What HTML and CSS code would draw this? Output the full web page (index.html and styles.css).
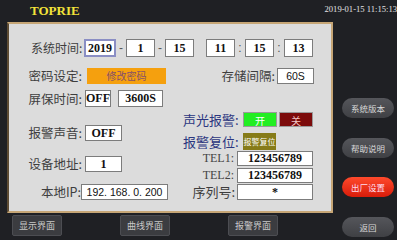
FILE: index.html
```html
<!DOCTYPE html>
<html>
	<head>
		<meta charset="UTF-8">
		<title>TOPRIE</title>
		<link rel="stylesheet" href="styles.css">
	</head>
	<body>
		<div class="top">
			<div class="brand">TOPRIE</div>
			<div class="clock">2019-01-15 11:15:13</div>
		</div>
		<div class="main">
			<div class="left">
				<div class="panel">
					<div class="time">
						<span class="lbl">系统时间:</span>
						<span class="fld on">2019</span>
						<span class="sep">-</span>
						<span class="fld">1</span>
						<span class="sep">-</span>
						<span class="fld">15</span>
						<span class="fld gap">11</span>
						<span class="sep">:</span>
						<span class="fld">15</span>
						<span class="sep">:</span>
						<span class="fld">13</span>
					</div>
					<div class="cols">
						<div class="col-l">
							<div class="item pwd">
								<span class="lbl">密码设定:</span>
								<span class="btn-pwd">修改密码</span>
							</div>
							<div class="item saver">
								<span class="lbl">屏保时间:</span>
								<span class="fld w26">OFF</span>
								<span class="fld w45">3600S</span>
							</div>
							<div class="item sound">
								<span class="lbl">报警声音:</span>
								<span class="fld w37">OFF</span>
							</div>
							<div class="item addr">
								<span class="lbl">设备地址:</span>
								<span class="fld w37">1</span>
							</div>
							<div class="item ip">
								<span class="lbl">本地IP:</span>
								<span class="fld sans w87">192. 168. 0. 200</span>
							</div>
						</div>
						<div class="col-r">
							<div class="item store">
								<span class="lbl">存储间隔:</span>
								<span class="fld sans w37">60S</span>
							</div>
							<div class="item alarm">
								<span class="blue">声光报警:</span>
								<span class="btn-on">开</span>
								<span class="btn-off">关</span>
							</div>
							<div class="item reset">
								<span class="blue">报警复位:</span>
								<span class="btn-reset">报警复位</span>
							</div>
							<div class="item tel tel1">
								<span class="tag">TEL1:</span>
								<span class="fld w76">123456789</span>
							</div>
							<div class="item tel tel2">
								<span class="tag">TEL2:</span>
								<span class="fld w76">123456789</span>
							</div>
							<div class="item tel sn">
								<span class="lbl">序列号:</span>
								<span class="fld w76">*</span>
							</div>
						</div>
					</div>
				</div>
				<div class="nav">
					<a href="javascript:;">显示界面</a>
					<a href="javascript:;">曲线界面</a>
					<a href="javascript:;">报警界面</a>
				</div>
			</div>
			<div class="side">
				<a href="javascript:;">系统版本</a>
				<a href="javascript:;">帮助说明</a>
				<a href="javascript:;" class="red">出厂设置</a>
				<a href="javascript:;">返回</a>
			</div>
		</div>
	</body>
</html>
```

FILE: styles.css
```css
* {margin:0; padding:0; box-sizing:border-box;}
body {width:397px; height:240px; overflow:hidden; background:#1f2024; font-family:"Noto Sans CJK SC", sans-serif; color:#3e3e3e;}
a {text-decoration:none;}

.top {height:22px; display:flex; justify-content:space-between;}
.brand {margin:3px 0 0 30px; font:bold 13px/16px "Liberation Serif", serif; color:#f2e33a;}
.clock {margin-top:4px; font:8.6px/10px "Liberation Serif", serif; color:#e4e4e4; white-space:nowrap;}

.main {display:flex;}
.left {width:333px;}
.panel {margin-left:7px; width:326px; height:191px; background:#dcdcdc; border:2px solid #c6a676; border-left-color:#5e4c34; padding-top:15px;}

.lbl {font-size:12.5px; line-height:16px; white-space:nowrap;}
.fld {display:flex; align-items:center; justify-content:center; height:100%; background:#fff; border:1px solid #7c7c7c; font:bold 12px "Liberation Serif", serif; color:#111; white-space:nowrap;}
.fld.sans {font:10.5px "Liberation Sans", sans-serif;}
.w26 {width:26px;}
.w37 {width:37px;}
.w45 {width:45px;}
.w76 {width:76px;}
.w87 {width:87px;}

.time {display:flex; align-items:center; height:18px; padding-left:22px;}
.time .lbl {width:53px; font-size:12px;}
.time .fld {width:29px;}
.time .fld.on {width:32px; border:2px solid #8a8ec4;}
.time .fld.gap {margin-left:12px;}
.sep {width:10px; text-align:center; font:12px "Liberation Sans", sans-serif; color:#555;}

.cols {display:flex; margin-top:11px;}
.col-l {width:166px; display:flex; flex-direction:column;}
.col-r {width:139px; display:flex; flex-direction:column;}
.item {display:flex; align-items:center;}
.col-l .lbl {width:73px; text-align:right;}
.col-l .fld {margin-left:3px;}

.pwd {height:16px;}
.saver {height:17px; margin-top:6px;}
.saver .w45 {margin-left:7px;}
.sound {height:16px; margin-top:18px;}
.addr {height:16px; margin-top:15px;}
.ip {height:16px; margin-top:12px;}
.ip .lbl {width:72px;}
.col-l .ip .fld {margin-left:0;}

.btn-pwd {margin-left:5px; width:79px; height:16px; background:#f5a00e; color:#86506a; font-size:10px; line-height:16px; text-align:center;}

.store {height:16px; justify-content:flex-end;}
.store .lbl {margin-right:2px;}
.alarm {height:15px; margin-top:28px; padding-left:8px;}
.reset {height:17px; margin-top:6px; padding-left:8px;}
.blue {width:60px; font-size:13px; line-height:16px; color:#2b3680; white-space:nowrap;}
.btn-on, .btn-off {width:34px; height:100%; font-size:10px; line-height:15px; text-align:center;}
.btn-on {background:#22ee22; color:#fff; border:1px solid #9a9a9a;}
.btn-off {margin-left:2px; background:#7c0b0b; color:#f3c4c4; border:1px solid #9a9a9a;}
.btn-reset {width:33px; height:100%; background:#867b18; color:#fff; font-size:8px; line-height:17px; text-align:center; white-space:nowrap;}

.tel {height:15px; justify-content:flex-end; padding-right:1px;}
.tel1 {margin-top:1px;}
.tel2 {margin-top:2px;}
.sn {height:16px; margin-top:1px;}
.tag {margin-right:3px; font:12px "Liberation Serif", serif; color:#444;}
.sn .lbl {margin-right:2px; font-size:13px;}

.nav {display:flex; gap:58px; margin-top:2px; padding-left:12px;}
.nav a {width:50px; height:21px; background:#3b3c40; border:1px solid #4c4d52; border-radius:2px; color:#c8c8c8; font-size:9px; line-height:19px; text-align:center;}

.side {display:flex; flex-direction:column; gap:19.5px; margin-left:9px; padding-top:76px;}
.side a {width:52px; height:20px; border-radius:10px; background:linear-gradient(#55565b, #3f4044); color:#d8d8d8; font-size:8.5px; line-height:20px; text-align:center;}
.side a.red {background:linear-gradient(#ff4a2c, #d81c0a); color:#fde;}
```
